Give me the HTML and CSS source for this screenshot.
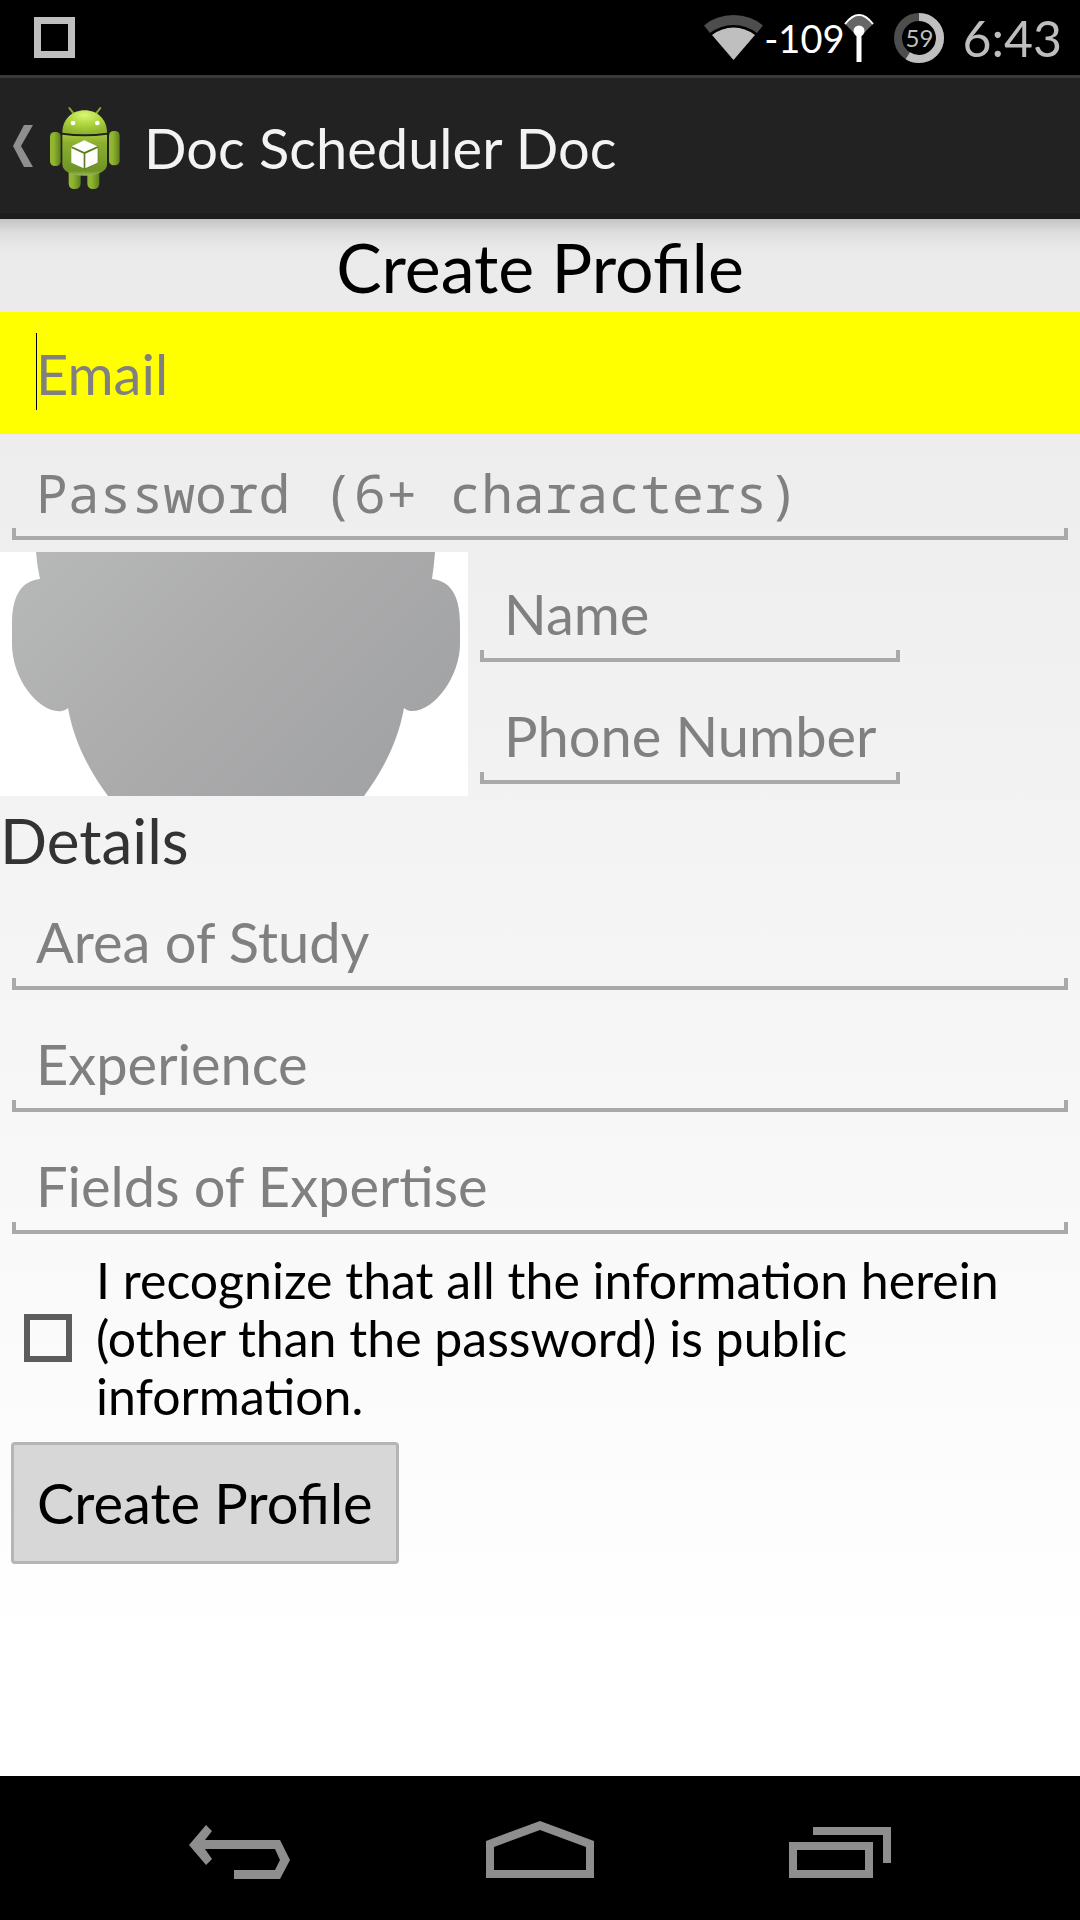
FILE: index.html
```html
<!DOCTYPE html>
<html lang="en">
<head>
<meta charset="utf-8">
<meta name="viewport" content="width=device-width, initial-scale=1">
<title>Doc Scheduler Doc</title>
<link rel="stylesheet" href="styles.css">
</head>
<body class="screen">
<div class="status-bar">
  <span class="status-square"></span>
  <div class="status-icons">
    <svg class="wifi-icon" width="60" height="46" viewBox="0 0 60 46" aria-hidden="true">
      <path fill="#4d4d4d" d="M0 10.500Q12 0 29.500 0T59 10.500L53 18Q42 10 29.500 10T6 18Z"/>
      <path fill="#bfbfbf" d="M8 20Q18 12.500 29.500 12.500T51 20L29.500 45Z"/>
    </svg>
    <span class="signal-text">-109</span>
    <svg class="antenna-icon" width="30" height="50" viewBox="0 0 30 50" aria-hidden="true">
      <path fill="#666" d="M1 11Q15-5 29 11L20 20H10Z"/>
      <path fill="none" stroke="#fff" stroke-width="2" d="M1 11Q15-7 29 11"/>
      <circle cx="15" cy="18" r="5.500" fill="#fff"/>
      <path fill="#fff" d="M12.500 18h5v31h-5z"/>
    </svg>
    <span class="battery">
      <svg width="50" height="50" viewBox="0 0 50 50" aria-hidden="true">
        <circle cx="25" cy="25" r="21" fill="none" stroke="#4d4d4d" stroke-width="8"/>
        <circle cx="25" cy="25" r="21" fill="none" stroke="#bfbfbf" stroke-width="8" pathLength="100" stroke-dasharray="59 41" transform="rotate(-90 25 25)"/>
      </svg>
      <span class="battery-level">59</span>
    </span>
    <time class="clock">6:43</time>
  </div>
</div>

<header class="action-bar">
  <button class="up-button" type="button" aria-label="Navigate up">
    <svg width="22" height="42" viewBox="0 0 22 42" aria-hidden="true">
      <path fill="#8f8f8f" d="M12 0h9L9 21l12 21h-9L1 21Z"/>
    </svg>
    <svg class="app-icon" width="90" height="100" viewBox="0 0 270 300" aria-hidden="true">
      <defs>
        <radialGradient id="head" cx=".5" cy=".2" r=".75">
          <stop offset="0" stop-color="#dcf577"/><stop offset=".45" stop-color="#b3da42"/><stop offset="1" stop-color="#8fb42e"/>
        </radialGradient>
        <linearGradient id="body" x1="0" y1="0" x2="0" y2="1">
          <stop offset="0" stop-color="#a4c93b"/><stop offset=".2" stop-color="#8caf2e"/><stop offset=".88" stop-color="#6f9426"/><stop offset="1" stop-color="#9fba5b"/>
        </linearGradient>
        <linearGradient id="limb">
          <stop offset="0" stop-color="#93b833"/><stop offset=".35" stop-color="#8fb52f"/><stop offset="1" stop-color="#5e7f20"/>
        </linearGradient>
      </defs>
      <path stroke="#86a93a" stroke-width="6" stroke-linecap="round" d="M88 36l13 17M181 36l-13 17"/>
      <rect x="86" y="215" width="36" height="64" rx="16" fill="url(#limb)"/>
      <rect x="142" y="215" width="36" height="64" rx="16" fill="url(#limb)"/>
      <rect x="30" y="108" width="32" height="102" rx="14" fill="url(#limb)"/>
      <rect x="207" y="105" width="32" height="103" rx="14" fill="url(#limb)"/>
      <path fill="url(#head)" d="M67 110C67 70 96 43 134 43S201 70 201 110Q134 120 67 110Z"/>
      <path fill="url(#body)" d="M67 116Q134 126 201 116V205C201 228 170 239 134 239S67 228 67 205Z"/>
      <circle cx="99" cy="81" r="7" fill="#fff"/>
      <circle cx="172" cy="81" r="7" fill="#fff"/>
      <path fill="#5d7d20" d="M96 153l39-18 40 18v48l-40 19-37-18z"/>
      <path fill="#fff" d="M133 133l39 18-39 17-38-17zM94 156l37 17v44l-37-17zM173 156l-37 17v44l37-17z"/>
    </svg>
  </button>
  <h1 class="app-title">Doc Scheduler Doc</h1>
</header>

<main class="content">
  <form class="profile-form">
    <h2 class="form-title">Create Profile</h2>
    <input class="field field-active" type="email" placeholder="Email" aria-label="Email">
    <input class="field field-password" type="password" placeholder="Password (6+ characters)" aria-label="Password">
    <div class="identity">
      <svg class="photo" viewBox="0 0 468 244" preserveAspectRatio="xMidYMid slice" role="img" aria-label="Profile photo">
        <defs>
          <linearGradient id="silhouette" gradientUnits="userSpaceOnUse" x1="50" y1="0" x2="350" y2="300">
            <stop offset="0" stop-color="#b6b7b7"/><stop offset=".5" stop-color="#ababac"/><stop offset="1" stop-color="#a1a2a4"/>
          </linearGradient>
        </defs>
        <rect width="468" height="244" fill="#fff"/>
        <path fill="url(#silhouette)" d="M36 0Q37 14 40 27C20 29 12 46 12 72V92C12 128 40 162 62 159Q66 158 68 156C74 190 90 220 108 244H364C382 220 398 190 404 156Q406 158 410 159C434 161 460 124 460 92V72C460 46 452 29 432 27Q434 14 435 0Z"/>
      </svg>
      <div class="identity-fields">
        <input class="field" type="text" placeholder="Name" aria-label="Name">
        <input class="field" type="tel" placeholder="Phone Number" aria-label="Phone Number">
      </div>
    </div>
    <h3 class="section-title">Details</h3>
    <input class="field" type="text" placeholder="Area of Study" aria-label="Area of Study">
    <input class="field" type="text" placeholder="Experience" aria-label="Experience">
    <input class="field" type="text" placeholder="Fields of Expertise" aria-label="Fields of Expertise">
    <label class="consent">
      <input class="consent-box" type="checkbox">
      <span>I recognize that all the information herein (other than the password) is public information.</span>
    </label>
    <button class="submit" type="submit">Create Profile</button>
  </form>
</main>

<nav class="nav-bar" aria-label="System navigation">
  <button class="nav-button" type="button" aria-label="Back">
    <svg width="102" height="60" viewBox="0 0 102 60" aria-hidden="true">
      <path fill="#8e8e8e" d="M17 4l6 6-7 9H91L101 39 91 58H45V49H86L91 39 86 28H16l7 10-6 6L0 24Z"/>
    </svg>
  </button>
  <button class="nav-button" type="button" aria-label="Home">
    <svg width="108" height="60" viewBox="0 0 108 60" aria-hidden="true">
      <path fill="#8e8e8e" fill-rule="evenodd" d="M54 0L108 20V57H0V20ZM54 9L8 26V49H100V26Z"/>
    </svg>
  </button>
  <button class="nav-button" type="button" aria-label="Recent apps">
    <svg width="102" height="60" viewBox="0 0 102 60" aria-hidden="true">
      <path fill="#8e8e8e" fill-rule="evenodd" d="M0 21H84V57H0ZM8 29V49H76V29ZM24 6H102V42H94V14H24Z"/>
    </svg>
  </button>
</nav>
</body>
</html>
```
FILE: styles.css
```css
* {
  box-sizing: border-box;
}

.screen {
  margin: 0;
  min-height: 100vh;
  display: flex;
  flex-direction: column;
  background: #000;
  color: #000;
  font-family: Lato, "Liberation Sans", sans-serif;
}

button,
input {
  font-family: inherit;
}

/* Status bar */

.status-bar {
  height: 75px;
  padding: 0 18px 0 34px;
  display: flex;
  align-items: center;
  justify-content: space-between;
  background: #000;
}

.status-square {
  width: 41px;
  height: 41px;
  border: 7px solid #bfbfbf;
}

.status-icons {
  display: flex;
  align-items: center;
  color: #bebebe;
}

.signal-text {
  color: #fff;
  font-size: 38px;
  line-height: 48px;
}

.antenna-icon {
  margin-right: 20px;
}

.battery {
  display: grid;
  place-items: center;
  margin-right: 18px;
}

.battery > * {
  grid-area: 1 / 1;
}

.battery-level {
  font-size: 24px;
  line-height: 28px;
}

.clock {
  font-size: 50px;
  line-height: 60px;
}

/* Action bar */

.action-bar {
  height: 144px;
  padding-left: 12px;
  display: flex;
  align-items: center;
  background: #222;
  border-top: 3px solid #3a3a3a;
  border-bottom: 6px solid #1c1c1c;
}

.up-button {
  padding: 0;
  border: 0;
  background: none;
  display: flex;
  align-items: center;
}

.app-icon {
  margin-left: 6px;
}

.app-title {
  margin: 0;
  padding: 4px 0 0 14px;
  color: #f3f3f3;
  font-size: 56px;
  font-weight: 400;
  line-height: 65px;
}

/* Form */

.content {
  flex: 1;
  background:
    linear-gradient(rgba(0, 0, 0, .16), rgba(0, 0, 0, .05) 14px, transparent 32px),
    linear-gradient(#eaeaea, #fff 92%);
}

.profile-form {
  display: flex;
  flex-direction: column;
}

.form-title {
  margin: 0;
  padding: 8px 0 6px;
  font-size: 68px;
  font-weight: 400;
  line-height: 79px;
  text-align: center;
}

.field {
  display: block;
  width: 100%;
  height: 122px;
  margin: 0;
  padding: 28px 24px 16px;
  border: 0 solid transparent;
  border-width: 0 12px 12px;
  border-radius: 0;
  outline: 0;
  background:
    linear-gradient(#a9a9a9, #a9a9a9) left bottom / 100% 4px,
    linear-gradient(#a9a9a9, #a9a9a9) left bottom / 4px 12px,
    linear-gradient(#a9a9a9, #a9a9a9) right bottom / 4px 12px;
  background-repeat: no-repeat;
  color: #000;
  font-size: 56px;
  line-height: 66px;
}

.field::placeholder {
  color: #808080;
  opacity: 1;
}

/* The focused field: solid highlight with the insertion caret at its start */
.field-active {
  background:
    linear-gradient(#000, #000) 24px 21px / 1px 77px no-repeat,
    #ff0;
}

.field-password {
  height: 118px;
  padding: 25px 24px 15px;
  font-family: "Droid Sans Mono", "Noto Sans Mono", "DejaVu Sans Mono", monospace;
  font-size: 53px;
}

.identity {
  display: flex;
}

.photo {
  flex: 0 1 468px;
  min-width: 0;
  height: 244px;
}

.identity-fields {
  flex: 0 1 444px;
}

.section-title {
  margin: 0;
  padding: 8px 0 4px;
  color: #333;
  font-size: 62px;
  font-weight: 400;
  line-height: 72px;
}

.consent {
  padding: 5px 24px 6px;
  display: flex;
  align-items: center;
  gap: 24px;
  font-size: 50px;
  line-height: 58px;
}

.consent-box {
  appearance: none;
  flex: none;
  width: 48px;
  height: 48px;
  margin: 0;
  border: 6px solid #5c5c5c;
}

.consent-box:checked {
  background: #5c5c5c content-box;
  padding: 6px;
}

.submit {
  align-self: flex-start;
  margin: 11px 11px 24px;
  padding: 25px 23px;
  border: 3px solid #b5b5b5;
  border-radius: 4px;
  background: #d7d7d7;
  color: #000;
  font-size: 56px;
  line-height: 66px;
}

/* Navigation bar */

.nav-bar {
  height: 144px;
  padding: 0 90px;
  display: flex;
  background: #000;
}

.nav-button {
  flex: 1;
  padding: 6px 0 0;
  border: 0;
  background: none;
  display: flex;
  align-items: center;
  justify-content: center;
}
```
